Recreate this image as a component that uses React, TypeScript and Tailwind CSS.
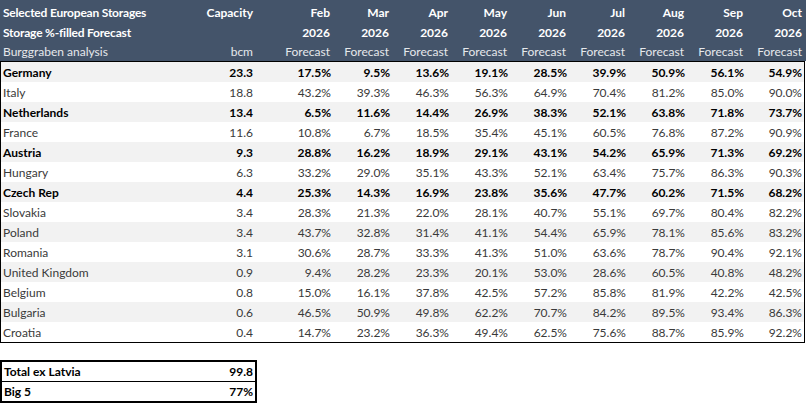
import React from "react";

type Row = { name: string; cap: string; vals: string[]; bold?: boolean };

const MONTHS = ["Feb", "Mar", "Apr", "May", "Jun", "Jul", "Aug", "Sep", "Oct"];

const ROWS: Row[] = [
  { name: "Germany", cap: "23.3", bold: true, vals: ["17.5%", "9.5%", "13.6%", "19.1%", "28.5%", "39.9%", "50.9%", "56.1%", "54.9%"] },
  { name: "Italy", cap: "18.8", vals: ["43.2%", "39.3%", "46.3%", "56.3%", "64.9%", "70.4%", "81.2%", "85.0%", "90.0%"] },
  { name: "Netherlands", cap: "13.4", bold: true, vals: ["6.5%", "11.6%", "14.4%", "26.9%", "38.3%", "52.1%", "63.8%", "71.8%", "73.7%"] },
  { name: "France", cap: "11.6", vals: ["10.8%", "6.7%", "18.5%", "35.4%", "45.1%", "60.5%", "76.8%", "87.2%", "90.9%"] },
  { name: "Austria", cap: "9.3", bold: true, vals: ["28.8%", "16.2%", "18.9%", "29.1%", "43.1%", "54.2%", "65.9%", "71.3%", "69.2%"] },
  { name: "Hungary", cap: "6.3", vals: ["33.2%", "29.0%", "35.1%", "43.3%", "52.1%", "63.4%", "75.7%", "86.3%", "90.3%"] },
  { name: "Czech Rep", cap: "4.4", bold: true, vals: ["25.3%", "14.3%", "16.9%", "23.8%", "35.6%", "47.7%", "60.2%", "71.5%", "68.2%"] },
  { name: "Slovakia", cap: "3.4", vals: ["28.3%", "21.3%", "22.0%", "28.1%", "40.7%", "55.1%", "69.7%", "80.4%", "82.2%"] },
  { name: "Poland", cap: "3.4", vals: ["43.7%", "32.8%", "31.4%", "41.1%", "54.4%", "65.9%", "78.1%", "85.6%", "83.2%"] },
  { name: "Romania", cap: "3.1", vals: ["30.6%", "28.7%", "33.3%", "41.3%", "51.0%", "63.6%", "78.7%", "90.4%", "92.1%"] },
  { name: "United Kingdom", cap: "0.9", vals: ["9.4%", "28.2%", "23.3%", "20.1%", "53.0%", "28.6%", "60.5%", "40.8%", "48.2%"] },
  { name: "Belgium", cap: "0.8", vals: ["15.0%", "16.1%", "37.8%", "42.5%", "57.2%", "85.8%", "81.9%", "42.2%", "42.5%"] },
  { name: "Bulgaria", cap: "0.6", vals: ["46.5%", "50.9%", "49.8%", "62.2%", "70.7%", "84.2%", "89.5%", "93.4%", "86.3%"] },
  { name: "Croatia", cap: "0.4", vals: ["14.7%", "23.2%", "36.3%", "49.4%", "62.5%", "75.6%", "88.7%", "85.9%", "92.2%"] },
];

// header spans the full page; the bordered body loses a pixel on each side
const HEAD_GRID = "grid grid-cols-[196px_60px_77px_repeat(8,59px)]";
const BODY_GRID = "grid grid-cols-[195px_60px_77px_repeat(7,59px)_58px]";

export default function App() {
  return (
    <div className="w-[806px] h-[405px] bg-white text-[12px] font-['Lato','Noto_Sans',sans-serif] overflow-hidden">
      {/* header band */}
      <div className="bg-[#44546a] text-white">
        <div className={`${HEAD_GRID} h-[22px] items-center pt-[3px] font-bold`}>
          <div className="pl-[3px] tracking-[-0.2px]">Selected European Storages</div>
          <div className="text-right pr-[3px]">Capacity</div>
          {MONTHS.map((m) => (
            <div key={m} className="text-right pr-[3px]">{m}</div>
          ))}
        </div>
        <div className={`${HEAD_GRID} h-[20px] items-center pt-[1px] font-bold`}>
          <div className="pl-[3px] tracking-[-0.2px]">Storage %-filled Forecast</div>
          <div />
          {MONTHS.map((m) => (
            <div key={m} className="text-right pr-[3px]">2026</div>
          ))}
        </div>
        <div className={`${HEAD_GRID} h-[19px] items-center pt-[1px] text-[#e6e8ec]`}>
          <div className="pl-[3px]">Burggraben analysis</div>
          <div className="text-right pr-[3px]">bcm</div>
          {MONTHS.map((m) => (
            <div key={m} className="text-right pr-[3px]">Forecast</div>
          ))}
        </div>
      </div>

      {/* country rows */}
      <div className="w-[805px] border border-black">
        {ROWS.map((r, i) => (
          <div
            key={r.name}
            className={`${BODY_GRID} h-[20px] items-center pt-[1px] ${i % 2 === 0 ? "bg-[#f2f2f2]" : "bg-white"} ${
              r.bold ? "font-bold text-black" : "text-[#3a3a3a]"
            }`}
          >
            <div className="pl-[2px]">{r.name}</div>
            <div className="text-right pr-[3px]">{r.cap}</div>
            {r.vals.map((v, j) => (
              <div key={j} className="text-right pr-[2px]">{v}</div>
            ))}
          </div>
        ))}
      </div>

      {/* summary box */}
      <div className="mt-[17px] w-[257px] border-2 border-black font-bold text-black">
        <div className="flex h-[20px] items-center justify-between px-[2px] pt-[1px] border-b border-black">
          <span>Total ex Latvia</span>
          <span>99.8</span>
        </div>
        <div className="flex h-[19px] items-center justify-between px-[2px] pt-[1px]">
          <span>Big 5</span>
          <span>77%</span>
        </div>
      </div>
    </div>
  );
}
